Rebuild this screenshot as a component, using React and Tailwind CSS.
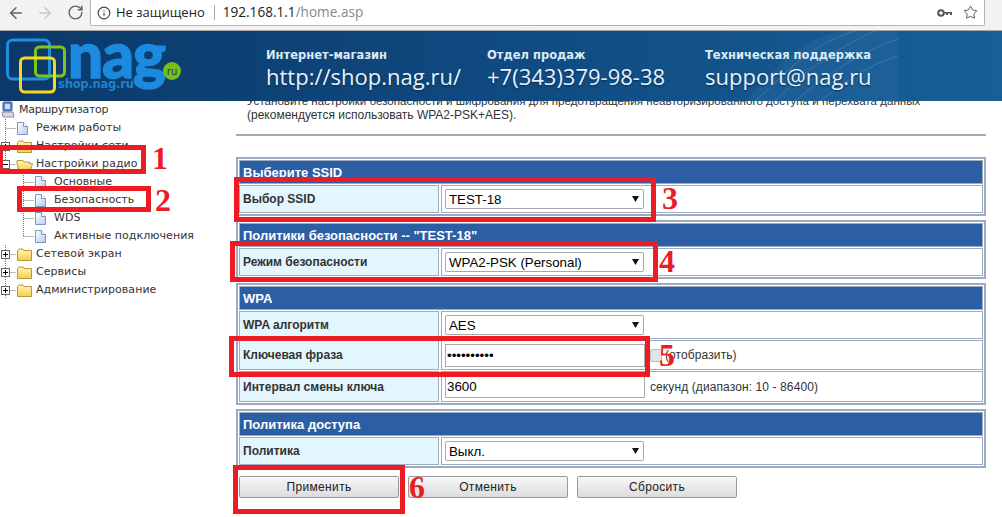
import { ArrowLeft, ArrowRight, RotateCw, Info, Star } from 'lucide-react';

// Строки дерева слева
const treeRows = [
  { joint: 'line', icon: 'page', label: 'Режим работы' },
  { joint: 'plus', icon: 'folder', label: 'Настройки сети' },
  { joint: 'minus', icon: 'open', label: 'Настройки радио' },
  { joint: 'line', nested: true, icon: 'page', label: 'Основные' },
  { joint: 'line', nested: true, icon: 'page', label: 'Безопасность' },
  { joint: 'line', nested: true, icon: 'page', label: 'WDS' },
  { joint: 'last', nested: true, icon: 'page', label: 'Активные подключения' },
  { joint: 'plus', icon: 'folder', label: 'Сетевой экран' },
  { joint: 'plus', icon: 'folder', label: 'Сервисы' },
  { joint: 'plus', icon: 'folder', label: 'Администрирование' },
];

function Joint({ type }) {
  return (
    <svg width="16" height="18" className="shrink-0" viewBox="0 0 16 18">
      <path d={type === 'last' ? 'M5.5 0V9' : 'M5.5 0V18'} stroke="#777" strokeDasharray="1 1" fill="none" />
      <path d="M5.5 9.5H16" stroke="#777" strokeDasharray="1 1" fill="none" />
      {(type === 'plus' || type === 'minus') && (
        <>
          <rect x="1.5" y="5.5" width="8" height="8" fill="#fff" stroke="#666" />
          <path d={type === 'plus' ? 'M3 9.5H8M5.5 7V12' : 'M3 9.5H8'} stroke="#000" fill="none" />
        </>
      )}
    </svg>
  );
}

function TreeIcon({ type }) {
  if (type === 'page') {
    return (
      <svg width="20" height="18" className="shrink-0" viewBox="0 0 20 18">
        <defs>
          <linearGradient id="pageFill" x1="0" y1="0" x2="1" y2="1">
            <stop offset="0" stopColor="#ffffff" />
            <stop offset="1" stopColor="#b5ccee" />
          </linearGradient>
        </defs>
        <path d="M1.5 3.5H7.5L11.5 7.5V15.5H1.5Z" fill="url(#pageFill)" stroke="#7e95c4" />
        <path d="M7.5 3.5V7.5H11.5" fill="#fff" stroke="#7e95c4" />
      </svg>
    );
  }
  return (
    <svg width="20" height="18" className="shrink-0" viewBox="0 0 20 18">
      <defs>
        <linearGradient id="folderFill" x1="0" y1="0" x2="0" y2="1">
          <stop offset="0" stopColor="#fff6b8" />
          <stop offset="1" stopColor="#f6cf4a" />
        </linearGradient>
      </defs>
      {type === 'open' ? (
        <path d="M2.5 15.5L1 8V5.5H7L8 7H13.5V8.5H16.5L14.5 15.5Z" fill="url(#folderFill)" stroke="#b8963a" />
      ) : (
        <path d="M1.5 15.5V5.5L3 4H7L8 5.5H15.5V15.5Z" fill="url(#folderFill)" stroke="#b8963a" />
      )}
    </svg>
  );
}

function RootIcon() {
  return (
    <svg width="18" height="18" className="shrink-0" viewBox="0 0 18 18">
      <rect x="3" y="1" width="9" height="9" rx="1" fill="#5f86c9" stroke="#3c5f9e" />
      <rect x="5" y="3" width="5" height="5" fill="#c6dbf5" />
      <path d="M2 11H13L14 16H3Z" fill="#d5d9e0" stroke="#8b93a3" />
    </svg>
  );
}

function Sidebar() {
  return (
    <div className="w-[236px] shrink-0 text-[11px] text-[#333] tracking-[0.05px] font-['DejaVu_Sans',sans-serif]">
      <div className="flex items-center h-[18px]">
        <RootIcon />
        <span className="ml-px tracking-[-0.3px]">Маршрутизатор</span>
      </div>
      {treeRows.map((row) => (
        <div key={row.label} className="flex items-center h-[18px]">
          {row.nested && <span className="w-[18px] shrink-0" />}
          <Joint type={row.joint} />
          <TreeIcon type={row.icon} />
          <span>{row.label}</span>
        </div>
      ))}
    </div>
  );
}

function Section({ title, children, className = '' }) {
  return (
    <div className={`border-2 border-[#9cabc0] p-px flex flex-col gap-px ${className}`}>
      <div className="h-[24px] bg-[#2c5ea3] border border-[#9cabc0] pl-[3px] pt-px flex items-center text-white font-bold text-[13px] font-['Liberation_Sans',sans-serif]">
        {title}
      </div>
      {children}
    </div>
  );
}

function Row({ label, h = 'h-[28px]', children }) {
  return (
    <div className={`flex gap-[2px] ${h}`}>
      <div className="w-[200px] shrink-0 bg-[#e3f5fd] border border-[#9cabc0] pl-[3px] flex items-center text-[12px] font-bold text-[#333] font-['Liberation_Sans',sans-serif]">
        {label}
      </div>
      <div className="flex-1 border border-[#9cabc0] pl-[3px] flex items-center gap-[5px] text-[12px] text-[#333] tracking-[0.1px]">
        {children}
      </div>
    </div>
  );
}

function Select({ value }) {
  return (
    <div className="relative w-[199px] h-[20px]">
      <select
        defaultValue={value}
        className="w-full h-full appearance-none bg-white border border-[#a9a9a9] rounded-[2px] pl-[3px] text-[13.3px] text-black tracking-normal"
      >
        <option>{value}</option>
      </select>
      <svg width="7" height="6" viewBox="0 0 7 6" className="absolute right-[5px] top-[7px] pointer-events-none">
        <path d="M0 0H7L3.5 6Z" fill="#111" />
      </svg>
    </div>
  );
}

function Field({ type = 'text', value }) {
  return (
    <input
      type={type}
      defaultValue={value}
      className="w-[200px] h-[23px] shrink-0 bg-white border border-[#a9a9a9] px-px text-[13.3px] text-black tracking-normal"
    />
  );
}

function ActionButton({ children }) {
  return (
    <button className="w-[160px] h-[22px] border border-[#999] rounded-[2px] bg-gradient-to-b from-[#f8f8f8] to-[#dcdcdc] text-[12px] text-[#222] tracking-[0.35px]">
      {children}
    </button>
  );
}

function Browser() {
  return (
    <div className="h-[31px] bg-[#f2f2f2] border-b border-[#a9a9a9] flex items-start shrink-0 pr-[17px]">
      <div className="flex items-center h-[25px] pl-[7px] gap-[11px] w-[90px] shrink-0">
        <ArrowLeft size={18} strokeWidth={2} className="text-[#5f6368]" />
        <ArrowRight size={18} strokeWidth={2} className="text-[#c6c6c6]" />
        <RotateCw size={17} strokeWidth={2} className="text-[#5f6368] ml-[2px]" />
      </div>
      <div className="flex-1 h-[26px] bg-white border-l border-r border-b border-[#b5b5b5] rounded-b-[2px] flex items-center pl-[6px] pr-[6px] font-['Open_Sans',sans-serif]">
        <Info size={14} strokeWidth={2} className="text-[#444]" />
        <span className="ml-[5px] text-[13px] text-[#222]">Не защищено</span>
        <span className="w-px h-[15px] bg-[#aaa] ml-[9px] mr-[8px]" />
        <span className="text-[13.6px] text-[#222]">192.168.1.1</span>
        <span className="text-[13.6px] text-[#888]">/home.asp</span>
        <svg width="16" height="8" viewBox="0 0 16 8" className="ml-auto mr-[10px]">
          <circle cx="4" cy="4" r="2.8" fill="none" stroke="#555" strokeWidth="2" />
          <path d="M7 3H15V6H13V4.5H11V6H9V4.5H7Z" fill="#555" />
        </svg>
        <Star size={15} strokeWidth={1.6} className="text-[#555]" />
      </div>
    </div>
  );
}

function Logo() {
  return (
    <div className="relative w-[190px] h-[70px]">
      <span className="absolute left-[68px] top-0 text-[62px] leading-[46px] font-black tracking-[-1px] text-[#1c8ade] [-webkit-text-stroke:1.5px_#1c8ade] font-['Lato',sans-serif]">
        nag
      </span>
      <svg width="70" height="70" viewBox="0 0 70 70" className="absolute left-0 top-0">
        <rect x="7.5" y="9" width="42" height="39" rx="5" fill="none" stroke="#1e8fdc" strokeWidth="3" />
        <rect x="35.5" y="16" width="29" height="29" rx="4" fill="none" stroke="#7fc41c" strokeWidth="3" />
        <rect x="20.5" y="27" width="34" height="34" rx="4" fill="none" stroke="#f5d81f" strokeWidth="3" />
      </svg>
      <span className="absolute left-[58px] top-[45px] text-[11.5px] leading-[16px] font-bold text-[#1f82cc] font-['DejaVu_Sans',sans-serif] tracking-[-0.2px]">
        shop.nag.ru
      </span>
      <span className="absolute left-[163px] top-[31px] w-[18px] h-[18px] rounded-full bg-[#76bd1d] flex items-center justify-center text-[10px] text-[#0f3c6e] font-['DejaVu_Sans',sans-serif]">
        ru
      </span>
    </div>
  );
}

function Contact({ title, value, className }) {
  return (
    <div className={`relative flex flex-col pt-[16px] ${className}`}>
      <span className="text-[11.5px] leading-[16px] font-bold text-[#dceaf7] font-['DejaVu_Sans',sans-serif]">{title}</span>
      <span className="text-[22px] leading-[26px] font-medium text-[#e6f2fb] [text-shadow:0_1px_2px_#0a2a50] font-['Open_Sans',sans-serif]">{value}</span>
    </div>
  );
}

function Banner() {
  return (
    <div className="relative z-10 h-[70px] shrink-0 flex overflow-hidden bg-gradient-to-r from-[#0c3969] via-[#0f4a80] to-[#185f97]">
      {/* сетка-волна на фоне баннера */}
      <svg width="153" height="70" viewBox="0 0 153 70" className="absolute left-[745px] top-0 pointer-events-none">
        <path d="M0 70C30 40 50 10 95 0H153V70Z" fill="#2a6ea3" opacity="0.35" />
        <path d="M10 70C40 45 60 15 110 0M30 70C55 45 85 20 130 0M50 70C75 50 105 25 153 8M75 70C95 55 120 35 153 25" fill="none" stroke="#6fa3cb" strokeOpacity="0.35" />
      </svg>
      <Logo />
      <Contact title="Интернет-магазин" value="http://shop.nag.ru/" className="ml-[76px] w-[221px]" />
      <Contact title="Отдел продаж" value="+7(343)379-98-38" className="w-[218px]" />
      <Contact title="Техническая поддержка" value="support@nag.ru" className="w-[200px]" />
    </div>
  );
}

function Content() {
  return (
    <div className="w-[750px] shrink-0 font-['Liberation_Sans',sans-serif]">
      <p className="-mt-[7px] pl-[11px] text-[12px] leading-[14px] text-[#333]">
        <span className="text-[11.6px]">
          Установите настройки безопасности и шифрования для предотвращения неавторизированного доступа и перехвата данных
        </span>
        <br />
        (рекомендуется использовать WPA2-PSK+AES).
      </p>
      <div className="h-[2px] bg-[#aaa] mt-[12px] mb-[21px]" />

      <Section title="Выберите SSID">
        <Row label="Выбор SSID"><Select value="TEST-18" /></Row>
      </Section>

      <Section title='Политики безопасности -- "TEST-18"' className="mt-[4px]">
        <Row label="Режим безопасности"><Select value="WPA2-PSK (Personal)" /></Row>
      </Section>

      <Section title="WPA" className="mt-[4px]">
        <Row label="WPA алгоритм"><Select value="AES" /></Row>
        <Row label="Ключевая фраза" h="h-[30px]">
          <Field type="password" value="1234567890" />
          <span className="w-[12px] h-[13px] bg-[#e4e4e4] border border-[#bbb] rounded-[2px] shrink-0" />
          <span className="-ml-[2px]">(отобразить)</span>
        </Row>
        <Row label="Интервал смены ключа" h="h-[31px]">
          <Field value="3600" />
          <span>секунд (диапазон: 10 - 86400)</span>
        </Row>
      </Section>

      <Section title="Политика доступа" className="mt-[4px]">
        <Row label="Политика"><Select value="Выкл." /></Row>
      </Section>

      <div className="flex gap-[9px] pl-[3px] mt-[8px]">
        <ActionButton>Применить</ActionButton>
        <ActionButton>Отменить</ActionButton>
        <ActionButton>Сбросить</ActionButton>
      </div>
    </div>
  );
}

// Красные пометки поверх скриншота
const redBoxes = [
  'left-0 top-[145px] w-[146px] h-[29px] border-l-[3px]',
  'left-[17px] top-[186px] w-[134px] h-[26px]',
  'left-[234px] top-[177px] w-[422px] h-[45px]',
  'left-[230px] top-[241px] w-[428px] h-[41px]',
  'left-[229px] top-[336px] w-[421px] h-[41px]',
  'left-[233px] top-[465px] w-[172px] h-[49px]',
];

const redNumbers = [
  { text: '1', cls: 'left-[152px] top-[140px]' },
  { text: '2', cls: 'left-[155px] top-[182px]' },
  { text: '3', cls: 'left-[662px] top-[180px]' },
  { text: '4', cls: 'left-[659px] top-[243px]' },
  { text: '5', cls: 'left-[659px] top-[337px]' },
  { text: '6', cls: 'left-[409px] top-[469px]' },
];

export default function App() {
  return (
    <div className="relative w-[1002px] h-[517px] overflow-hidden bg-white flex flex-col">
      <Browser />
      <Banner />
      <div className="flex flex-1">
        <Sidebar />
        <Content />
      </div>

      {redBoxes.map((cls) => (
        <div key={cls} className={`absolute border-[5px] border-[#ed1c24] z-20 ${cls}`} />
      ))}
      {redNumbers.map((n) => (
        <span key={n.text} className={`absolute z-20 text-[32px] leading-[36px] font-bold text-[#ed1c24] font-['Liberation_Serif',serif] ${n.cls}`}>
          {n.text}
        </span>
      ))}
    </div>
  );
}
